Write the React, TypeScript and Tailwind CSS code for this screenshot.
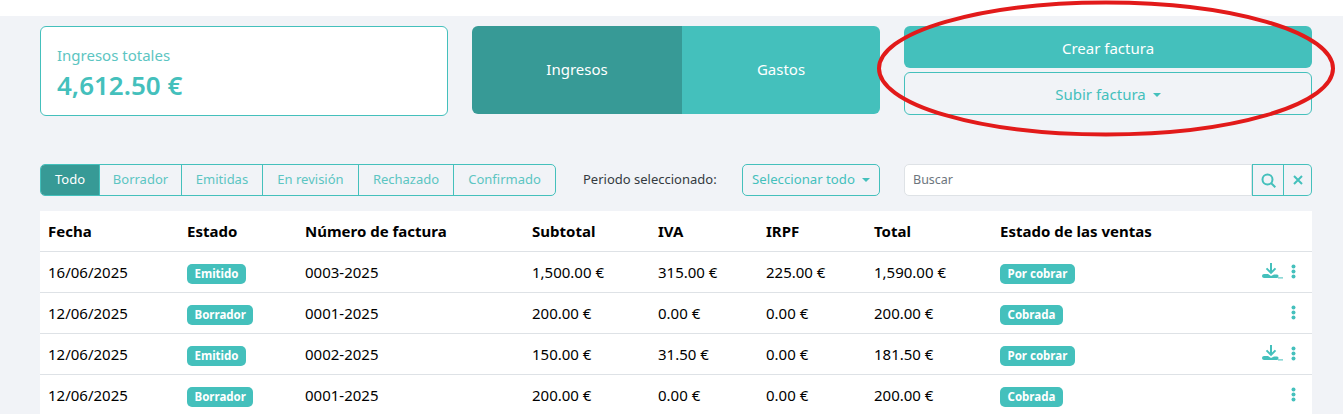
import React from 'react';

const tabs = [
  { label: 'Todo', w: 'w-[58px]' },
  { label: 'Borrador', w: 'w-[82px]' },
  { label: 'Emitidas', w: 'w-[81px]' },
  { label: 'En revisión', w: 'w-[96px]' },
  { label: 'Rechazado', w: 'w-[95px]' },
  { label: 'Confirmado', w: 'flex-1' },
];

const rows = [
  { date: '16/06/2025', status: 'Emitido', num: '0003-2025', sub: '1,500.00 €', iva: '315.00 €', irpf: '225.00 €', total: '1,590.00 €', sale: 'Por cobrar', dl: true },
  { date: '12/06/2025', status: 'Borrador', num: '0001-2025', sub: '200.00 €', iva: '0.00 €', irpf: '0.00 €', total: '200.00 €', sale: 'Cobrada', dl: false },
  { date: '12/06/2025', status: 'Emitido', num: '0002-2025', sub: '150.00 €', iva: '31.50 €', irpf: '0.00 €', total: '181.50 €', sale: 'Por cobrar', dl: true },
  { date: '12/06/2025', status: 'Borrador', num: '0001-2025', sub: '200.00 €', iva: '0.00 €', irpf: '0.00 €', total: '200.00 €', sale: 'Cobrada', dl: false },
];

const Caret = () => <span className="ml-[7px] inline-block border-x-[4px] border-t-[4px] border-x-transparent border-t-current align-[2px]" />;

const Badge = ({ text }: { text: string }) => (
  <span className="inline-block rounded-[5px] bg-[#44c0bc] px-[7.5px] py-[3px] text-[11.5px] leading-[14px] font-bold text-white">{text}</span>
);

const DownloadIcon = () => (
  <svg width="21" height="17" viewBox="0 0 21 17" className="text-[#44c0bc]" fill="currentColor">
    <path d="M8 0h2v7.500l2.800-2.800 1.400 1.400L9 11.200 3.800 6.100l1.400-1.400L8 7.500z" />
    <path d="M2 11h4l3 2 3-1.500h3c1 0 1.500.8 1.500 1.500s-.5 2-1.500 2H2c-1 0-2-.8-2-2s1-2 2-2z" />
    <rect x="16" y="14.400" width="5" height="1" />
  </svg>
);

const Dots = () => (
  <svg width="5" height="15" viewBox="0 0 5 15" fill="#44c0bc">
    <circle cx="2.500" cy="2.500" r="2" />
    <circle cx="2.500" cy="7.500" r="2" />
    <circle cx="2.500" cy="12.500" r="2" />
  </svg>
);

export default function App() {
  return (
    <div className="relative h-[414px] overflow-hidden bg-white font-['Noto_Sans',sans-serif] text-[15px]">
      <div className="mt-4 h-[398px] bg-[#f1f3f7] px-10 pt-2.5 pr-[31px]">
        <div className="grid grid-cols-3 gap-6">
          <div className="flex h-[90px] flex-col justify-center rounded-[6px] border border-[#44c0bc] bg-white px-4 pt-[5px]">
            <div className="mb-[2px] text-[15px] leading-[20px] text-[#5cc5c2]">Ingresos totales</div>
            <div className="text-[26px] leading-[36px] font-semibold text-[#44c0bc]">4,612.50 €</div>
          </div>
          <div className="flex h-[88px] overflow-hidden rounded-[6px] text-white">
            <div className="flex w-[210px] items-center justify-center bg-[#379a96] pb-[2px]">Ingresos</div>
            <div className="flex flex-1 items-center justify-center bg-[#44c0bc] pb-[2px]">Gastos</div>
          </div>
          <div className="flex flex-col gap-1">
            <div className="flex h-[42px] items-center justify-center rounded-[6px] bg-[#44c0bc] pt-[3px] text-white">Crear factura</div>
            <div className="flex h-[43px] items-center justify-center rounded-[6px] border border-[#44c0bc] pt-[2px] text-[#44c0bc]">
              Subir factura
              <Caret />
            </div>
          </div>
        </div>

        <div className="mt-12 flex h-[32px] items-center text-[13px]">
          <div className="flex h-[32px] w-[516px] overflow-hidden rounded-[5px] border border-[#44c0bc] text-[#5cc5c2]">
            {tabs.map((t, i) => (
              <div
                key={t.label}
                className={
                  i === 0
                    ? `flex ${t.w} items-center justify-center bg-[#379a96] text-white`
                    : `flex ${t.w} items-center justify-center border-l border-[#44c0bc] whitespace-nowrap`
                }
              >
                {t.label}
              </div>
            ))}
          </div>
          <span className="ml-[27px] w-[159px] whitespace-nowrap text-[#343a40]">Periodo seleccionado:</span>
          <div className="flex h-[32px] w-[138px] items-center justify-center rounded-[5px] border border-[#44c0bc] whitespace-nowrap text-[13.2px] text-[#44c0bc]">
            Seleccionar todo
            <Caret />
          </div>
          <div className="ml-6 flex h-[32px] flex-1">
            <div className="flex flex-1 items-center rounded-l-[5px] border border-[#dee2e6] bg-white px-2 pt-[1px] text-[12.5px] text-[#6c757d]">Buscar</div>
            <div className="flex w-[32px] items-center justify-center border border-[#44c0bc]">
              <svg width="15" height="15" viewBox="0 0 15 15" fill="none" stroke="#44c0bc" strokeWidth="2">
                <circle cx="6.500" cy="6.500" r="5" />
                <path d="M10 10l4.300 4.300" />
              </svg>
            </div>
            <div className="flex w-[28px] items-center justify-center rounded-r-[5px] border border-l-0 border-[#44c0bc]">
              <svg width="10" height="10" viewBox="0 0 10 10" stroke="#44c0bc" strokeWidth="2">
                <path d="M1 1l8 8M9 1l-8 8" />
              </svg>
            </div>
          </div>
        </div>

        <table className="mt-[15px] w-full table-fixed border-collapse bg-white text-[15px] text-black">
          <colgroup>
            <col className="w-[139px]" />
            <col className="w-[118px]" />
            <col className="w-[227px]" />
            <col className="w-[126px]" />
            <col className="w-[108px]" />
            <col className="w-[108px]" />
            <col className="w-[126px]" />
            <col />
            <col className="w-[70px]" />
          </colgroup>
          <thead>
            <tr className="h-[40px] border-b border-[#dee2e6] text-left">
              {['Fecha', 'Estado', 'Número de factura', 'Subtotal', 'IVA', 'IRPF', 'Total', 'Estado de las ventas', ''].map((h, i) => (
                <th key={i} className="px-2 font-bold">{h}</th>
              ))}
            </tr>
          </thead>
          <tbody>
            {rows.map((r, i) => (
              <tr key={i} className="h-[41px] border-b border-[#dee2e6]">
                <td className="px-2 pt-[2px]">{r.date}</td>
                <td className="px-2 pt-[2px]"><Badge text={r.status} /></td>
                <td className="px-2 pt-[2px]">{r.num}</td>
                <td className="px-2 pt-[2px]">{r.sub}</td>
                <td className="px-2 pt-[2px]">{r.iva}</td>
                <td className="px-2 pt-[2px]">{r.irpf}</td>
                <td className="px-2 pt-[2px]">{r.total}</td>
                <td className="px-2 pt-[2px]"><Badge text={r.sale} /></td>
                <td className="px-2">
                  <div className="flex items-center justify-end gap-[8px] pr-[8px]">
                    {r.dl && <DownloadIcon />}
                    <Dots />
                  </div>
                </td>
              </tr>
            ))}
          </tbody>
        </table>
      </div>

      {/* hand-drawn annotation on top of the page */}
      <svg className="pointer-events-none absolute top-0 left-[870px]" width="473" height="140" viewBox="0 0 473 140" fill="none">
        <ellipse cx="236" cy="68.500" rx="227" ry="66" stroke="#e21a1a" strokeWidth="4" />
      </svg>
    </div>
  );
}
